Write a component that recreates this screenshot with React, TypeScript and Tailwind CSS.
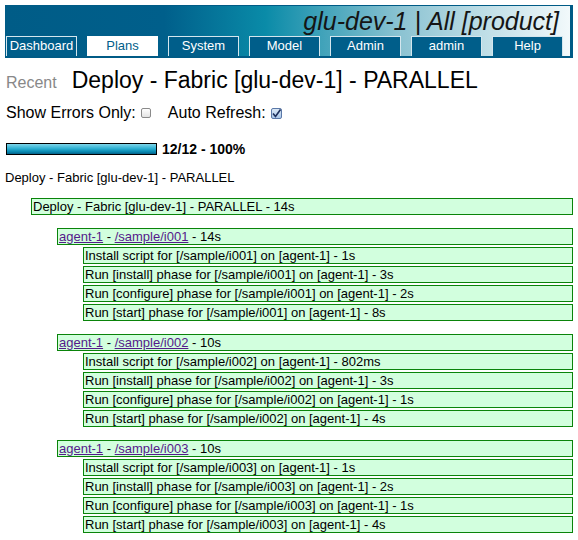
import React from "react";

type Group = { inst: string; time: string; steps: string[] };

const tabs = ["Dashboard", "Plans", "System", "Model", "Admin", "admin", "Help"];

const groups: Group[] = [
  {
    inst: "/sample/i001",
    time: "14s",
    steps: [
      "Install script for [/sample/i001] on [agent-1] - 1s",
      "Run [install] phase for [/sample/i001] on [agent-1] - 3s",
      "Run [configure] phase for [/sample/i001] on [agent-1] - 2s",
      "Run [start] phase for [/sample/i001] on [agent-1] - 8s",
    ],
  },
  {
    inst: "/sample/i002",
    time: "10s",
    steps: [
      "Install script for [/sample/i002] on [agent-1] - 802ms",
      "Run [install] phase for [/sample/i002] on [agent-1] - 3s",
      "Run [configure] phase for [/sample/i002] on [agent-1] - 1s",
      "Run [start] phase for [/sample/i002] on [agent-1] - 4s",
    ],
  },
  {
    inst: "/sample/i003",
    time: "10s",
    steps: [
      "Install script for [/sample/i003] on [agent-1] - 1s",
      "Run [install] phase for [/sample/i003] on [agent-1] - 2s",
      "Run [configure] phase for [/sample/i003] on [agent-1] - 1s",
      "Run [start] phase for [/sample/i003] on [agent-1] - 4s",
    ],
  },
];

const box = "h-[17px] border border-[#0a840a] bg-[#d2ffde] pl-[1px] text-[13px] leading-[15px] text-black whitespace-nowrap overflow-hidden";

function Header() {
  return (
    <div className="mx-[5px] mt-[5px] h-[53px] w-[568px] border border-r-[3px] border-[#005b86] bg-[linear-gradient(to_right,#005c87_0%,#005f8b_28%,#0a8ba8_46%,#8cc3d2_70%,#f2f9fb_100%)] flex flex-col">
      <div className="flex-1 flex justify-end pr-[11px] pt-[1px]">
        <span className="italic text-[25px] leading-[28px] text-[#151515]">glu-dev-1 | All [product]</span>
      </div>
      <div className="flex gap-[10px] border-b border-[#005b86]">
        {tabs.map(t =>
          t === "Plans" ? (
            <div key={t} className="w-[71px] h-[20px] bg-white text-[#005e8a] text-[13px] leading-[19px] text-center">
              {t}
            </div>
          ) : (
            <div
              key={t}
              className="w-[71px] h-[20px] bg-[#005e8a] border-l border-t border-r border-[#d4e6ee] text-white text-[13px] leading-[18px] text-center"
            >
              {t}
            </div>
          )
        )}
      </div>
    </div>
  );
}

export default function App() {
  return (
    <div className="w-[578px] h-[540px] bg-white overflow-hidden font-['Liberation_Sans',Arial,sans-serif] text-black">
      <Header />

      <div className="flex items-baseline mt-[9px] ml-[6px]">
        <span className="text-[16px] text-[#888888]">Recent</span>
        <span className="ml-[15px] text-[23px] leading-[26px]">Deploy - Fabric [glu-dev-1] - PARALLEL</span>
      </div>

      <div className="flex items-center mt-[9px] ml-[6px] text-[16px] leading-[18px]">
        <span>Show Errors Only:</span>
        <span className="ml-[5px] w-[10px] h-[10px] rounded-[2px] border border-[#8a8a8a] bg-[linear-gradient(#ffffff,#e4e4e4)]" />
        <span className="ml-[17px]">Auto Refresh:</span>
        <span className="ml-[5px] w-[11px] h-[11px] rounded-[2px] border border-[#5a78a8] bg-[linear-gradient(#dbe8f6,#a9c6e8)] flex items-center justify-center">
          <svg width="9" height="9" viewBox="0 0 9 9">
            <path d="M1 4.5 L3.5 7.5 L8.5 0.5" fill="none" stroke="#1d2f5c" strokeWidth="1.6" />
          </svg>
        </span>
      </div>

      <div className="flex items-center mt-[19px] ml-[6px]">
        <div className="w-[151px] h-[12px] border border-black bg-[linear-gradient(#7fd6ea_0%,#2eb0d2_45%,#0a8cb4_75%,#04628a_100%)]" />
        <span className="ml-[5px] font-bold text-[14px] leading-[16px]">12/12 - 100%</span>
      </div>

      <div className="mt-[13px] ml-[5px] text-[13px] leading-[15px]">Deploy - Fabric [glu-dev-1] - PARALLEL</div>

      <div className="mt-[13px] ml-[31px] w-[542px] flex flex-col">
        <div className={box}>Deploy - Fabric [glu-dev-1] - PARALLEL - 14s</div>
        {groups.map(g => (
          <div key={g.inst} className="mt-[13px] ml-[26px] flex flex-col gap-[2px]">
            <div className={box}>
              <a href="#" className="text-[#551a8b] underline">agent-1</a>
              {" - "}
              <a href="#" className="text-[#551a8b] underline">{g.inst}</a>
              {" - " + g.time}
            </div>
            {g.steps.map(s => (
              <div key={s} className={box + " ml-[26px]"}>
                {s}
              </div>
            ))}
          </div>
        ))}
      </div>
    </div>
  );
}
